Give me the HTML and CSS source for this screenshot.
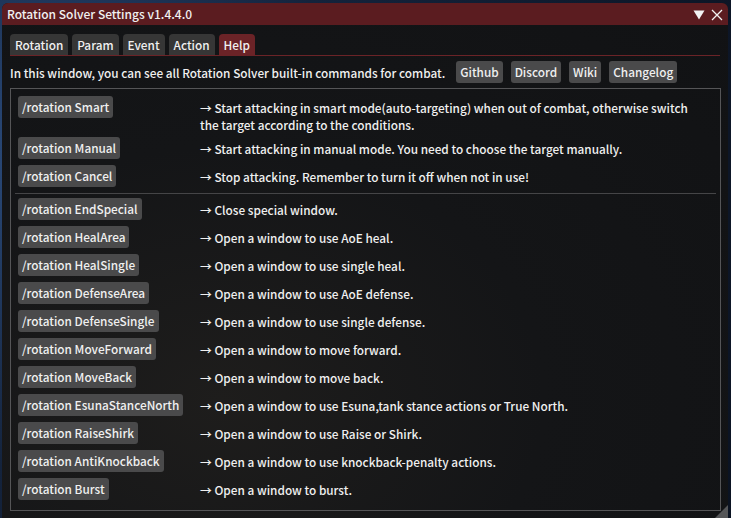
FILE: index.html
```html
<!DOCTYPE html>
<html>
<head>
<meta charset="utf-8">
<link rel="stylesheet" href="styles.css">
</head>
<body>
<div class="window">
  <div class="titlebar">
    <span class="title">Rotation Solver Settings v1.4.4.0</span>
    <span class="controls">
      <svg width="12" height="10" viewBox="0 0 12 10"><polygon points="0.5,0.5 11.5,0.5 6,9.5" fill="#f2f2f2"/></svg>
      <svg width="12" height="12" viewBox="0 0 12 12"><path d="M1 1 L11 11 M11 1 L1 11" stroke="#f2f2f2" stroke-width="1.3" fill="none"/></svg>
    </span>
  </div>
  <div class="content">
    <div class="tabs">
      <span class="tab">Rotation</span>
      <span class="tab">Param</span>
      <span class="tab">Event</span>
      <span class="tab">Action</span>
      <span class="tab active">Help</span>
    </div>
    <div class="intro">
      <span class="intro-text">In this window, you can see all Rotation Solver built-in commands for combat.</span>
      <span class="btn link">Github</span>
      <span class="btn link">Discord</span>
      <span class="btn link">Wiki</span>
      <span class="btn link">Changelog</span>
    </div>
    <div class="table">
      <div class="row tall"><span class="btn">/rotation Smart</span><span class="desc">→ Start attacking in smart mode(auto-targeting) when out of combat, otherwise switch the target according to the conditions.</span></div>
      <div class="row"><span class="btn">/rotation Manual</span><span class="desc">→ Start attacking in manual mode. You need to choose the target manually.</span></div>
      <div class="row"><span class="btn">/rotation Cancel</span><span class="desc">→ Stop attacking. Remember to turn it off when not in use!</span></div>
      <div class="sep"></div>
      <div class="row"><span class="btn">/rotation EndSpecial</span><span class="desc">→ Close special window.</span></div>
      <div class="row"><span class="btn">/rotation HealArea</span><span class="desc">→ Open a window to use AoE heal.</span></div>
      <div class="row"><span class="btn">/rotation HealSingle</span><span class="desc">→ Open a window to use single heal.</span></div>
      <div class="row"><span class="btn">/rotation DefenseArea</span><span class="desc">→ Open a window to use AoE defense.</span></div>
      <div class="row"><span class="btn">/rotation DefenseSingle</span><span class="desc">→ Open a window to use single defense.</span></div>
      <div class="row"><span class="btn">/rotation MoveForward</span><span class="desc">→ Open a window to move forward.</span></div>
      <div class="row"><span class="btn">/rotation MoveBack</span><span class="desc">→ Open a window to move back.</span></div>
      <div class="row"><span class="btn">/rotation EsunaStanceNorth</span><span class="desc">→ Open a window to use Esuna,tank stance actions or True North.</span></div>
      <div class="row"><span class="btn">/rotation RaiseShirk</span><span class="desc">→ Open a window to use Raise or Shirk.</span></div>
      <div class="row"><span class="btn">/rotation AntiKnockback</span><span class="desc">→ Open a window to use knockback-penalty actions.</span></div>
      <div class="row"><span class="btn">/rotation Burst</span><span class="desc">→ Open a window to burst.</span></div>
    </div>
  </div>
  <div class="grip"></div>
</div>
</body>
</html>
```
FILE: styles.css
```css
html, body {
  margin: 0;
  padding: 0;
  height: 518px;
  overflow: hidden;
}
body {
  background: radial-gradient(circle at 5% 30%, #2a4a7a 0, #14233c 40%, #0b1322 100%);
  font-family: "Noto Sans CJK JP", "Noto Sans", sans-serif;
  font-weight: 500;
  font-size: 11.8px;
  color: #f0f0f0;
}
.window {
  position: relative;
  margin: 3px 0 0 2px;
  width: 726px;
  height: 530px;
  background: radial-gradient(ellipse at 30% 75%, #1e1d1c 0, #141517 45%, #111214 100%);
  border-radius: 6px 6px 0 0;
  box-sizing: border-box;
  overflow: hidden;
}
.titlebar {
  height: 22px;
  background: #5b1c20;
  display: flex;
  align-items: center;
  justify-content: space-between;
  padding: 0 5px;
  line-height: 22px;
  font-size: 12px;
}
.controls {
  display: flex;
  align-items: center;
  gap: 6px;
  padding-top: 1px;
}
.content {
  padding: 9px 8px 0 8px;
}
.tabs {
  display: flex;
  gap: 4px;
  height: 21px;
  border-bottom: 1px solid #6b2327;
  width: 710px;
}
.tab {
  background: #363636;
  border-radius: 4px 4px 0 0;
  padding: 0 5px;
  line-height: 22px;
  height: 21px;
}
.tab.active {
  background: #6b2327;
}
.intro {
  display: flex;
  align-items: center;
  margin-top: 5px;
  height: 22px;
}
.intro-text {
  margin-right: 11px;
}
.btn {
  display: inline-block;
  background: #4a4a4b;
  border-radius: 3px;
  padding: 0 4px;
  line-height: 22px;
  height: 22px;
  white-space: nowrap;
}
.btn.link {
  margin-right: 8px;
}
.table {
  margin-top: 5px;
  width: 711px;
  height: 423px;
  box-sizing: border-box;
  border: 1px solid #555557;
  padding: 7px 7px 0 7px;
  display: flex;
  flex-direction: column;
  gap: 4px;
}
.row {
  display: grid;
  grid-template-columns: 182px 1fr;
  min-height: 24px;
  align-items: start;
}
.row .btn {
  justify-self: start;
}
.desc {
  line-height: 17px;
  padding-top: 3px;
  padding-right: 10px;
}
.sep {
  height: 1px;
  background: #454547;
  margin: 0 -3px;
}
.grip {
  position: absolute;
  right: 0;
  top: 502px;
  width: 0;
  height: 0;
  border-left: 14px solid transparent;
  border-bottom: 14px solid #555658;
}
```
